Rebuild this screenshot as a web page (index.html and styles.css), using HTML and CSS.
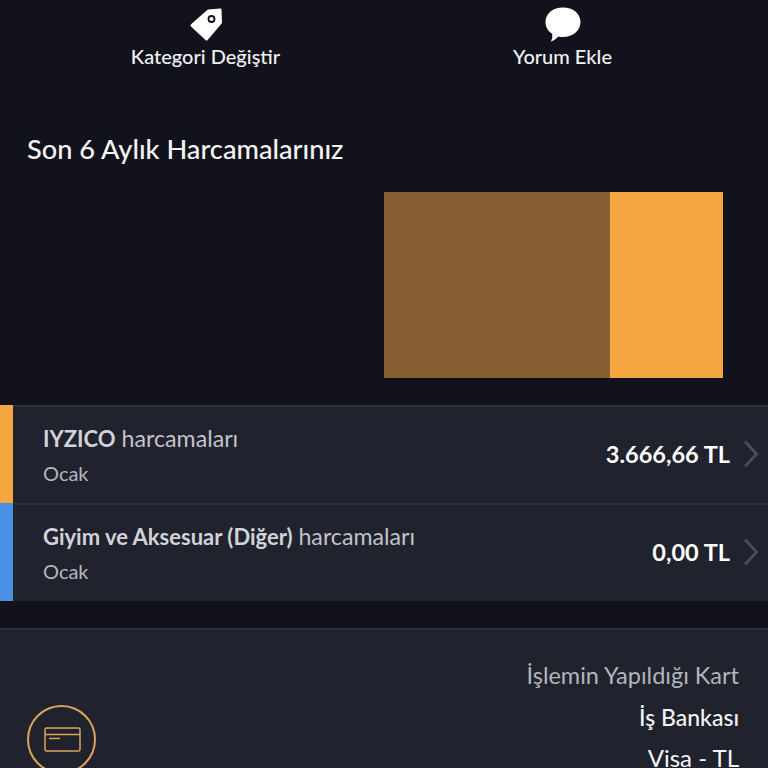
FILE: index.html

```html
<!DOCTYPE html>
<html lang="tr">
<head>
  <meta charset="UTF-8" />
  <title>Harcama Detayı</title>
  <link rel="stylesheet" href="styles.css">
</head>
<body>
  <div class="actions">
    <div class="action">
      <svg class="action-icon" width="36" height="36" viewBox="0 0 36 36">
        <path fill="#fff" stroke="#fff" stroke-width="3" stroke-linejoin="round" d="M20.500 4 L32 3 L32.500 15.500 L18.500 32 L4 18.500 Z"/>
        <circle cx="23.500" cy="12" r="3" fill="none" stroke="#12121c" stroke-width="1.800"/>
      </svg>
      <span>Kategori Değiştir</span>
    </div>
    <div class="action">
      <svg class="action-icon" width="36" height="36" viewBox="0 0 36 36">
        <path fill="#fff" d="M18 0.500 C28 0.500 35.500 6.500 35.500 15 C35.500 23.500 28 30 18 30 Q15.500 30 13.500 29.400 Q10 33 5.800 34.800 Q8 31 7.200 26.800 C3 24 0.500 20 0.500 15 C0.500 6.500 8 0.500 18 0.500 Z"/>
      </svg>
      <span>Yorum Ekle</span>
    </div>
  </div>

  <h2 class="section-title">Son 6 Aylık Harcamalarınız</h2>

  <div class="chart">
    <div class="bar bar-dim"></div>
    <div class="bar bar-main"></div>
  </div>

  <div class="list">
    <div class="row">
      <div class="row-color orange"></div>
      <div class="row-text">
        <div class="row-title"><strong>IYZICO</strong> harcamaları</div>
        <div class="row-sub">Ocak</div>
      </div>
      <div class="row-amount">3.666,66 TL</div>
      <svg class="chevron" width="16" height="28" viewBox="0 0 16 28"><path d="M2 1.500 L13.500 14 L2 26.500" fill="none" stroke="#4a4c5a" stroke-width="3"/></svg>
    </div>
    <div class="row">
      <div class="row-color blue"></div>
      <div class="row-text">
        <div class="row-title"><strong>Giyim ve Aksesuar (Diğer)</strong> harcamaları</div>
        <div class="row-sub">Ocak</div>
      </div>
      <div class="row-amount">0,00 TL</div>
      <svg class="chevron" width="16" height="28" viewBox="0 0 16 28"><path d="M2 1.500 L13.500 14 L2 26.500" fill="none" stroke="#4a4c5a" stroke-width="3"/></svg>
    </div>
  </div>

  <div class="card-panel">
    <div class="card-circle">
      <svg width="38" height="26" viewBox="0 0 38 26">
        <rect x="1" y="1" width="35" height="23" rx="1.500" fill="none" stroke="#d9a55c" stroke-width="1.500"/>
        <path d="M1 7.500 H36" stroke="#d9a55c" stroke-width="1.500"/>
        <path d="M5 11.500 H16" stroke="#d9a55c" stroke-width="1.500"/>
      </svg>
    </div>
    <div class="card-info">
      <div class="card-label">İşlemin Yapıldığı Kart</div>
      <div class="card-bank">İş Bankası</div>
      <div class="card-type">Visa - TL</div>
    </div>
  </div>
</body>
</html>
```

FILE: styles.css

```css
html, body { height: 768px; overflow: hidden; }
body { margin: 0; background: #12121c; color: #fff; font-family: Lato, "Noto Sans", sans-serif; }

.actions { display: grid; grid-template-columns: 1fr 1fr; padding: 7px 27px 0; }
.action { display: flex; flex-direction: column; align-items: center; font-size: 20px; font-weight: 500; color: #f2f2f4; }
.action span { line-height: 27px; }
.action-icon { display: block; }

.section-title { margin: 0; padding: 62px 27px 0; font-size: 27.200px; font-weight: 500; line-height: 34px; color: #f5f5f7; height: 60px; }

.chart { display: flex; justify-content: flex-end; padding-right: 45px; height: 186px; }
.bar { height: 100%; }
.bar-dim { width: 226px; background: #855f31; }
.bar-main { width: 113px; background: #f4a640; }

.list { margin-top: 27px; }
.row { display: flex; align-items: center; height: 98px; box-sizing: border-box; background: #20222d; border-top: 2px solid #2e303b; padding-right: 9px; }
.row-color { align-self: stretch; width: 13px; margin-top: -2px; flex: none; }
.orange { background: #f4a640; }
.blue { background: #4a90e2; }
.row-text { flex: 1; padding-left: 30px; }
.row-title { font-size: 23.200px; color: #c2c3c9; line-height: 26px; }
.row-title strong { font-size: 22px; font-weight: 700; color: #d2d3d8; }
.row-sub { margin-top: 8px; font-size: 20px; line-height: 26px; color: #b4b5bc; }
.row-amount { font-size: 23.500px; font-weight: 700; color: #fff; margin: 0 13px 2px 0; }
.chevron { display: block; margin-bottom: 2px; }

.card-panel { display: flex; justify-content: space-between; margin-top: 27px; background: #20222d; border-top: 2px solid #2e303b; padding: 0 29px 0 27px; height: 300px; }
.card-circle { display: flex; align-items: center; justify-content: center; width: 63px; height: 65px; margin-top: 75px; padding-left: 2px; border: 2px solid #d9a55c; border-radius: 50%; flex: none; }
.card-info { text-align: right; padding-top: 29px; }
.card-label { font-size: 23.500px; line-height: 32px; color: #b4b5bc; }
.card-bank { margin-top: 10px; font-size: 23px; line-height: 32px; font-weight: 500; color: #f5f5f7; }
.card-type { margin-top: 9px; font-size: 24px; line-height: 32px; color: #f5f5f7; }
```
